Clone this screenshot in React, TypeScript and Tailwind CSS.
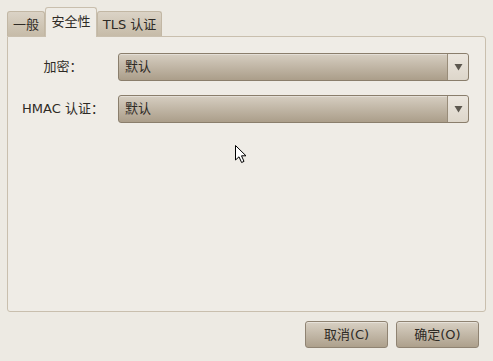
import React from 'react'

const font = { fontFamily: '"DejaVu Sans", "Noto Sans CJK SC", sans-serif' }

function Combo({ value }: { value: string }) {
  return (
    <div className="flex h-[28px] w-[351px] rounded-[3px] border border-[#8a7e6c] bg-gradient-to-b from-[#d6cec1] to-[#ab9e8a] shadow-[inset_0_1px_0_rgba(255,255,255,0.35)]">
      <div className="flex flex-1 items-center pl-[6px] text-[13px] text-[#2e2a25]">{value}</div>
      <div className="flex w-[21px] items-center justify-center rounded-r-[3px] border-l border-[#988c79] bg-gradient-to-b from-[#ece7df] to-[#ddd6ca]">
        <svg width="9" height="8" viewBox="0 0 9 8">
          <path d="M0.5 1 L8.5 1 L4.5 7.5 Z" fill="#5c574e" />
        </svg>
      </div>
    </div>
  )
}

function Button({ label }: { label: string }) {
  return (
    <div className="flex h-[27px] w-[83px] items-center justify-center rounded-[3px] border border-[#8f8372] bg-gradient-to-b from-[#d8d0c3] to-[#ada08c] text-[13px] text-[#2e2a25] shadow-[inset_0_1px_0_rgba(255,255,255,0.4)]">
      {label}
    </div>
  )
}

export default function App() {
  return (
    <div className="relative flex h-[361px] w-[493px] flex-col bg-[#edeae3] pl-[7px] pt-[7px] text-[#2e2a25]" style={font}>
      {/* Tabs */}
      <div className="flex h-[29px] items-end">
        <div className="flex h-[25px] w-[38px] items-center justify-center rounded-t-[3px] border border-b-0 border-[#c2b7a4] bg-gradient-to-b from-[#dbd3c6] to-[#c6bba8] pt-[2px] text-[13px]">
          一般
        </div>
        <div className="relative z-10 -mb-px flex h-[30px] w-[52px] items-center justify-center rounded-t-[3px] border border-b-0 border-[#c9bfae] bg-[#efece6] pb-[2px] text-[13px]">
          安全性
        </div>
        <div className="flex h-[25px] w-[65px] items-center justify-center rounded-t-[3px] border border-b-0 border-[#c2b7a4] bg-gradient-to-b from-[#dbd3c6] to-[#c6bba8] pt-[2px] text-[13px]">
          TLS 认证
        </div>
      </div>

      {/* Panel */}
      <div className="flex h-[276px] w-[479px] flex-col gap-[14px] rounded-b-[3px] rounded-tr-[3px] border border-[#c9bfae] bg-[#efece6] pt-[16px]">
        <div className="flex items-center gap-[6px]">
          <div className="w-[104px] pl-[6px] text-center text-[13px]">加密：</div>
          <Combo value="默认" />
        </div>
        <div className="flex items-center gap-[6px]">
          <div className="w-[104px] pl-[6px] text-center text-[13px]">HMAC 认证：</div>
          <Combo value="默认" />
        </div>
      </div>

      {/* Buttons */}
      <div className="mt-[9px] flex w-[472px] justify-end gap-[8px]">
        <Button label="取消(C)" />
        <Button label="确定(O)" />
      </div>

      {/* Mouse pointer */}
      <svg className="absolute left-[234px] top-[144px]" width="14" height="21" viewBox="0 0 14 21">
        <path d="M1.5 1.5 L1.5 16 L5 12.8 L7.6 18.5 L10 17.4 L7.5 11.8 L12 11.8 Z" fill="#fff" stroke="#000" strokeWidth="1" strokeLinejoin="round" />
      </svg>
    </div>
  )
}
